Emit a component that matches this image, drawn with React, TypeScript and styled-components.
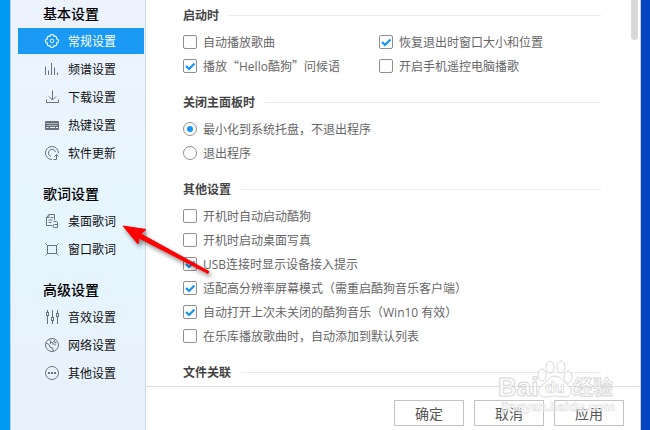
import React, { useState } from "react";
import styled, { createGlobalStyle } from "styled-components";

const GlobalStyle = createGlobalStyle`
  *, *::before, *::after { box-sizing: border-box; }
  body {
    margin: 0;
    font-family: "Noto Sans CJK SC", "Open Sans", sans-serif;
    font-size: 12px;
    line-height: 24px;
    color: #666;
  }
  button, input { font: inherit; color: inherit; }
`;

const Desktop = styled.div`
  position: relative;
  display: flex;
  height: 100vh;
  overflow: hidden;
  padding: 0 9px 0 10px;
  background: linear-gradient(to right, #009af3 0, #009af3 50%, #0443c2 50%, #0443c2 100%);
`;

const Window = styled.div`
  display: flex;
  flex: 1;
  min-width: 0;
  background: #fff;
  border: solid #bccfdf;
  border-width: 0 1px;
`;

const Sidebar = styled.nav`
  flex: none;
  display: flex;
  flex-direction: column;
  gap: 14px;
  width: 135px;
  padding: 0 1px 0 7px;
  border-right: 1px solid #ccd7e4;
  background: linear-gradient(#edf3fe 0, #e8f5ff 40%, #e5f5fe 62%, #e8f2fd 82%, #e8f2fd 100%);
`;

const NavTitle = styled.h2`
  margin: 0 0 2px;
  padding-left: 25px;
  font-size: 14px;
  font-weight: 500;
  line-height: 26px;
  color: #000;
`;

const NavList = styled.ul`
  display: grid;
  gap: 2px;
  margin: 0;
  padding: 0;
  list-style: none;
`;

const NavButton = styled.button<{ $active: boolean }>`
  display: flex;
  align-items: center;
  gap: 9px;
  width: 100%;
  height: 26px;
  padding: 0 0 0 27px;
  border: 0;
  text-align: left;
  background: ${(p) => (p.$active ? "#1a9af5" : "transparent")};
  color: ${(p) => (p.$active ? "#fff" : "#111")};
  svg { color: ${(p) => (p.$active ? "#fff" : "#68727a")}; }
`;

const Main = styled.main`
  flex: 1;
  display: flex;
  flex-direction: column;
  min-width: 0;
`;

const Scroller = styled.div`
  flex: 1;
  display: flex;
  min-height: 0;
  overflow: hidden;
`;

const Sections = styled.div`
  flex: 1;
  display: flex;
  flex-direction: column;
  gap: 12px;
  padding: 3px 30px 0 37px;
`;

const ScrollThumb = styled.div`
  flex: none;
  width: 7px;
  height: 40px;
  margin-right: 2px;
  border-radius: 0 0 4px 4px;
  background: #d9d9d9;
`;

const Group = styled.fieldset`
  min-width: 0;
  margin: 0;
  padding: 0;
  border: 0;
`;

const GroupTitle = styled.legend`
  display: flex;
  align-items: center;
  gap: 10px;
  width: 100%;
  margin-bottom: 3px;
  padding: 0;
  font-weight: 700;
  color: #444;
  &::after {
    content: "";
    flex: 1;
    height: 1px;
    background: #ebebeb;
  }
`;

const Options = styled.div<{ $columns?: boolean }>`
  display: grid;
  grid-template-columns: ${(p) => (p.$columns ? "196px 1fr" : "1fr")};
`;

const Option = styled.label`
  display: flex;
  align-items: center;
  gap: 6px;
  height: 24px;
  white-space: nowrap;
`;

const Control = styled.span`
  display: grid;
  flex: none;
  > * { grid-area: 1 / 1; }
  svg { pointer-events: none; visibility: hidden; }
  input:checked + svg { visibility: visible; }
`;

const Toggle = styled.input`
  appearance: none;
  width: 14px;
  height: 14px;
  margin: 0;
  border: 1px solid #8f8f8f;
  border-radius: ${(p) => (p.type === "radio" ? "50%" : "2px")};
  background: #fff;
`;

const Latin = styled.span`
  font-family: "Open Sans", sans-serif;
`;

const Footer = styled.footer`
  display: flex;
  flex: none;
  justify-content: flex-end;
  gap: 10px;
  height: 44px;
  padding: 13px 16px 0 0;
  border-top: 1px solid #dedede;
`;

const ActionButton = styled.button`
  width: 70px;
  height: 26px;
  padding: 0;
  border: 1px solid #c3c3c3;
  background: #fff;
  font-size: 14px;
  line-height: 24px;
  color: #555;
`;

const Pointer = styled.svg`
  position: absolute;
  left: 115px;
  top: 218px;
  pointer-events: none;
  filter: drop-shadow(2px 3px 2px rgba(0, 0, 0, 0.45));
`;

const Watermark = styled.svg`
  position: absolute;
  right: 32px;
  bottom: 12px;
  pointer-events: none;
  font-family: "Liberation Sans", "Noto Sans CJK SC", sans-serif;
  font-weight: 700;
`;

const shapes: Record<string, React.ReactNode> = {
  gear: (
    <>
      <path
        d="M5 2.2Q5.2 .5 7 .5T9 2.2Q11.8 1.6 11.8 5 13.5 5.2 13.5 7T11.8 9Q12 12.2 9 11.8 8.8 13.5 7 13.5T5 11.8Q2 12.2 2.2 9 .5 8.8 .5 7T2.2 5Q2 1.8 5 2.2Z"
        strokeWidth="1.2"
      />
      <rect x="5.5" y="5.5" width="3" height="3" rx=".8" />
    </>
  ),
  bars: <path d="M.5 4.5V13M3.5 8.5V13M6.5 1v12M9.5 5.5V13M12.5 10.5V13" />,
  download: <path d="M7.5 .5v9M4 6.5l3.5 3.5L11 6.5M1.5 9.5v3h12v-3" />,
  keyboard: (
    <>
      <rect x="0" y="3" width="14" height="9" rx="1" fill="currentColor" stroke="none" />
      <path d="M1.5 5.5h11M2.5 7.5h10" stroke="#edf6fe" strokeDasharray="1 1" />
      <path d="M1.5 9.5h2M5 9.5h5M11 9.5h2" stroke="#edf6fe" />
    </>
  ),
  update: (
    <>
      <path d="M7 13.5A6.5 6.5 0 1 1 13.4 7.5" />
      <path d="M6 10.4A3.6 3.6 0 1 1 10.5 6" />
      <path d="M8.5 13.5h3V8.5M9.5 10.5l2-2 2 2" />
    </>
  ),
  lyrics: (
    <>
      <path d="M7 11.5H1.5v-8L4 .5h5.5V6M4 .5v3H1.5M5.5 3.5h3M3.5 6h4M3.5 8.5h3" />
      <path d="M8.5 7.5h3q1 0 1 1v5h-3q-1.5 0-1.5-1.5t1.5-1.5h3" />
    </>
  ),
  frame: (
    <>
      <rect x="2.5" y="3.5" width="9" height="8" />
      <path d="M.5 1.5l2 2M13.5 1.5l-2 2M.5 13.5l2-2M13.5 13.5l-2-2" />
    </>
  ),
  sliders: (
    <>
      <path d="M2.5 0v2M2.5 6v8M7.5 0v7M7.5 11v3M12.5 0v3M12.5 7v7" />
      <rect x="1.5" y="2.5" width="2" height="3" />
      <rect x="6.5" y="7.5" width="2" height="3" />
      <rect x="11.5" y="3.5" width="2" height="3" />
    </>
  ),
  globe: (
    <>
      <circle cx="7" cy="7" r="6.5" />
      <path d="M1 5l3 1.5L5 9l3 1.5v2.5M4.5 1.5 6 4l2 1v2M10 1.5 8.5 4l3 .5" />
      <path d="M9.5 6.5h1M5 5h1" strokeWidth="2" />
    </>
  ),
  more: (
    <>
      <circle cx="7" cy="7" r="6.5" />
      <path d="M3 7h2M6 7h2M9 7h2" strokeWidth="2" />
    </>
  ),
};

function Glyph({ name }: { name: string }) {
  return (
    <svg width="14" height="14" viewBox="0 0 14 14" fill="none" stroke="currentColor" overflow="visible" aria-hidden="true">
      {shapes[name]}
    </svg>
  );
}

const navGroups = [
  {
    title: "基本设置",
    items: [
      ["gear", "常规设置"],
      ["bars", "频谱设置"],
      ["download", "下载设置"],
      ["keyboard", "热键设置"],
      ["update", "软件更新"],
    ],
  },
  {
    title: "歌词设置",
    items: [
      ["lyrics", "桌面歌词"],
      ["frame", "窗口歌词"],
    ],
  },
  {
    title: "高级设置",
    items: [
      ["sliders", "音效设置"],
      ["globe", "网络设置"],
      ["more", "其他设置"],
    ],
  },
];

interface ChoiceProps {
  type?: "checkbox" | "radio";
  checked?: boolean;
  children: React.ReactNode;
}

function Choice({ type = "checkbox", checked = false, children }: ChoiceProps) {
  return (
    <Option>
      <Control>
        <Toggle type={type} name={type === "radio" ? "on-close" : undefined} defaultChecked={checked} />
        <svg width="14" height="14" viewBox="0 0 14 14" fill="none" aria-hidden="true">
          {type === "radio" ? (
            <circle cx="7" cy="7" r="3" fill="#1495f5" />
          ) : (
            <path d="M3 7l3 3 5.5-5.5" stroke="#1495f5" strokeWidth="2.2" />
          )}
        </svg>
      </Control>
      <span>{children}</span>
    </Option>
  );
}

export default function App() {
  const [active, setActive] = useState("常规设置");
  return (
    <>
      <GlobalStyle />
      <Desktop>
        <Window>
          <Sidebar>
            {navGroups.map((group) => (
              <section key={group.title}>
                <NavTitle>{group.title}</NavTitle>
                <NavList>
                  {group.items.map(([icon, label]) => (
                    <li key={label}>
                      <NavButton
                        type="button"
                        $active={active === label}
                        aria-current={active === label ? "page" : undefined}
                        onClick={() => setActive(label)}
                      >
                        <Glyph name={icon} />
                        {label}
                      </NavButton>
                    </li>
                  ))}
                </NavList>
              </section>
            ))}
          </Sidebar>
          <Main>
            <Scroller>
              <Sections>
                <Group>
                  <GroupTitle>启动时</GroupTitle>
                  <Options $columns>
                    <Choice>自动播放歌曲</Choice>
                    <Choice checked>恢复退出时窗口大小和位置</Choice>
                    <Choice checked>
                      播放“<Latin>Hello</Latin>酷狗”问候语
                    </Choice>
                    <Choice>开启手机遥控电脑播歌</Choice>
                  </Options>
                </Group>
                <Group>
                  <GroupTitle>关闭主面板时</GroupTitle>
                  <Options>
                    <Choice type="radio" checked>最小化到系统托盘，不退出程序</Choice>
                    <Choice type="radio">退出程序</Choice>
                  </Options>
                </Group>
                <Group>
                  <GroupTitle>其他设置</GroupTitle>
                  <Options>
                    <Choice>开机时自动启动酷狗</Choice>
                    <Choice>开机时启动桌面写真</Choice>
                    <Choice checked>
                      <Latin>USB</Latin>连接时显示设备接入提示
                    </Choice>
                    <Choice checked>适配高分辨率屏幕模式（需重启酷狗音乐客户端）</Choice>
                    <Choice checked>
                      自动打开上次未关闭的酷狗音乐（<Latin>Win10 </Latin>有效）
                    </Choice>
                    <Choice>在乐库播放歌曲时，自动添加到默认列表</Choice>
                  </Options>
                </Group>
                <Group>
                  <GroupTitle>文件关联</GroupTitle>
                </Group>
              </Sections>
              <ScrollThumb />
            </Scroller>
            <Footer>
              <ActionButton type="button">确定</ActionButton>
              <ActionButton type="button">取消</ActionButton>
              <ActionButton type="button">应用</ActionButton>
            </Footer>
          </Main>
        </Window>
        <Pointer width="100" height="62" viewBox="0 0 100 62" aria-hidden="true">
          <path d="M8 8 31 11.5 26 16 94 53.5 93 55.5 24 20 23 26Z" fill="#f00" stroke="#f00" strokeLinejoin="round" />
        </Pointer>
        <Watermark width="120" height="60" viewBox="0 0 120 60" fill="#fff" fillOpacity="0.6" stroke="#d6d6d6">
          <text x="0" y="38" fontSize="26">Bai</text>
          <ellipse cx="44" cy="17" rx="4" ry="6" />
          <ellipse cx="52" cy="9" rx="4" ry="6" />
          <ellipse cx="63" cy="9" rx="4" ry="6" />
          <ellipse cx="70" cy="19" rx="4" ry="6" />
          <path d="M57 18c-6 0-8 6-13 9-7 6-3 12 4 12 4 0 5-1 9-1s5 1 10 1c7 0 9-7 3-12-5-3-7-9-13-9Z" />
          <text x="47" y="35" fontSize="16" strokeWidth=".7">du</text>
          <text x="75" y="37" fontSize="20" strokeWidth=".8">经验</text>
          <text x="3" y="53" fontSize="13" stroke="#e2e2e2" strokeWidth=".7">jingyan.baidu.com</text>
        </Watermark>
      </Desktop>
    </>
  );
}
